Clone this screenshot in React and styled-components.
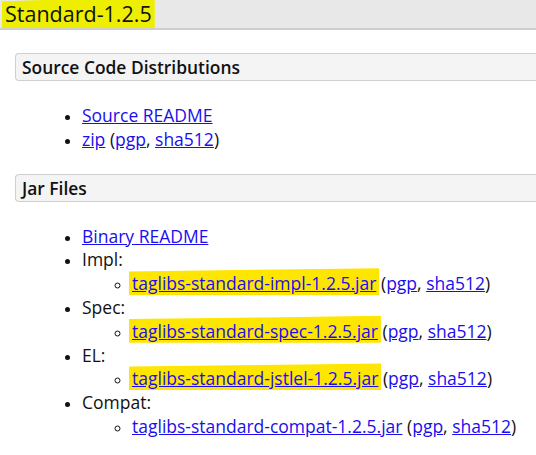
import React from "react";
import styled, { createGlobalStyle } from "styled-components";

const Global = createGlobalStyle`
  html, body { margin: 0; padding: 0; background: #fff; }
  body { font-family: "Open Sans", "Noto Sans", sans-serif; color: #000; }
`;

const Page = styled.div`
  width: 536px;
  height: 455px;
  overflow: hidden;
`;

const TitleBar = styled.div`
  height: 28px;
  background: #e8e8e8;
  border-bottom: 2px solid #cfcfcf;
  display: flex;
  align-items: center;
  padding-left: 5px;
`;

const Title = styled.h1`
  margin: 0;
  font-size: 21.5px;
  font-weight: 400;
  line-height: 26px;
  color: #111;
`;

const Marker = styled.span`
  background: ${(p) => p.$color || "#ffe600"};
  clip-path: ${(p) => p.$clip || "none"};
  padding: ${(p) => p.$pad || "2px 4px"};
  margin: ${(p) => p.$margin || "0 -4px"};
  -webkit-box-decoration-break: clone;
`;

const Content = styled.div`
  padding: 23px 0 0 15px;
`;

const SectionHeader = styled.h2`
  margin: 0;
  height: 26px;
  display: flex;
  align-items: center;
  padding-left: 6px;
  font-size: 17.4px;
  font-weight: 600;
  color: #111;
  background: #f4f4f4;
  border: 1px solid #cfcfcf;
  border-right: none;
  border-radius: 4px 0 0 4px;
`;

const List = styled.ul`
  margin: ${(p) => (p.$nested ? "0" : "23px 0 22px 0")};
  padding-left: ${(p) => (p.$nested ? "50px" : "67px")};
  list-style-type: ${(p) => (p.$nested ? "circle" : "disc")};
  font-size: 17.5px;
  line-height: 23.8px;
  color: #111;
`;

const Item = styled.li`
  &::marker { font-size: 15px; }
`;

const Link = styled.a`
  color: #1a0dee;
  text-decoration: underline;
`;

const jars = [
  { label: "Impl:", file: "taglibs-standard-impl-1.2.5.jar", hl: true },
  { label: "Spec:", file: "taglibs-standard-spec-1.2.5.jar", hl: true },
  { label: "EL:", file: "taglibs-standard-jstlel-1.2.5.jar", hl: true },
  { label: "Compat:", file: "taglibs-standard-compat-1.2.5.jar", hl: false },
];

const Sigs = () => (
  <>
    {" "}(<Link href="#">pgp</Link>, <Link href="#">sha512</Link>)
  </>
);

export default function App() {
  return (
    <Page>
      <Global />
      <TitleBar>
        <Title>
          <Marker $color="#eeee00" $pad="1px 3px 0 3px" $margin="0 -3px" $clip="polygon(0 12%, 40% 4%, 100% 0, 100% 100%, 0 100%)">
            Standard-1.2.5
          </Marker>
        </Title>
      </TitleBar>
      <Content>
        <SectionHeader>Source Code Distributions</SectionHeader>
        <List>
          <Item><Link href="#">Source README</Link></Item>
          <Item><Link href="#">zip</Link><Sigs /></Item>
        </List>
        <SectionHeader>Jar Files</SectionHeader>
        <List>
          <Item><Link href="#">Binary README</Link></Item>
          {jars.map((j) => (
            <Item key={j.file}>
              {j.label}
              <List $nested>
                <Item>
                  {j.hl ? (
                    <Marker $pad="3px 3px 0 3px" $margin="0 -3px" $clip="polygon(0 12%, 60% 5%, 100% 0, 100% 100%, 0 100%)">
                      <Link href="#">{j.file}</Link>
                    </Marker>
                  ) : (
                    <Link href="#">{j.file}</Link>
                  )}
                  <Sigs />
                </Item>
              </List>
            </Item>
          ))}
        </List>
      </Content>
    </Page>
  );
}
